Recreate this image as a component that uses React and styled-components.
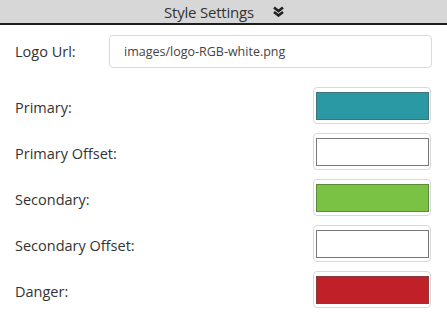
import React from "react";
import styled, { createGlobalStyle } from "styled-components";

const Global = createGlobalStyle`
  html, body { margin: 0; padding: 0; background: #fff; }
  body { font-family: "Open Sans", "Noto Sans", sans-serif; color: #333; }
`;

const Panel = styled.div`
  width: 447px;
  height: 315px;
  background: #fff;
  overflow: hidden;
`;

const Header = styled.div`
  height: 23px;
  background: #d7d7d7;
  border-bottom: 2px solid #1e1e1e;
  display: flex;
  align-items: center;
  justify-content: center;
  gap: 18px;
  padding-left: 2px;
  box-sizing: content-box;
`;

const Title = styled.span`
  font-size: 15px;
  color: #333;
  letter-spacing: -0.2px;
`;

const Body = styled.div`
  padding: 10px 15px 0 15px;
  display: flex;
  flex-direction: column;
`;

const Row = styled.div`
  display: flex;
  align-items: center;
  justify-content: space-between;
  height: ${(p) => p.$h}px;
  margin-bottom: ${(p) => p.$mb}px;
`;

const Label = styled.span`
  font-size: 14.5px;
  color: #333;
  padding-top: ${(p) => p.$pt || 0}px;
`;

const TextInput = styled.div`
  width: 323px;
  height: 33px;
  box-sizing: border-box;
  border: 1px solid #d9d9d9;
  border-radius: 4px;
  display: flex;
  align-items: center;
  padding-left: 14px;
  font-size: 12.5px;
  color: #444;
`;

const ColorBox = styled.div`
  width: 118px;
  height: 37px;
  box-sizing: border-box;
  border: 1px solid #d9d9d9;
  border-radius: 4px;
  padding: 4px 1px 3px 2px;
  margin-right: 1px;
  display: flex;
`;

const Swatch = styled.div`
  flex: 1;
  background: ${(p) => p.$color};
  border: 1px solid ${(p) => p.$border};
`;

const Chevron = () => (
  <svg width="13" height="11" viewBox="0 0 13 11">
    <path d="M2 1.5 L6.5 5 L11 1.5" fill="none" stroke="#222" strokeWidth="2.6" />
    <path d="M2 6 L6.5 9.5 L11 6" fill="none" stroke="#222" strokeWidth="2.6" />
  </svg>
);

const colors = [
  { label: "Primary:", color: "#2a99a3", border: "#41737a" },
  { label: "Primary Offset:", color: "#ffffff", border: "#777777" },
  { label: "Secondary:", color: "#7ac244", border: "#5a8a3a" },
  { label: "Secondary Offset:", color: "#ffffff", border: "#777777" },
  { label: "Danger:", color: "#c02027", border: "#8a3a3a" },
];

export default function App() {
  return (
    <>
      <Global />
      <Panel>
        <Header>
          <Title>Style Settings</Title>
          <Chevron />
        </Header>
        <Body>
          <Row $h={33} $mb={19}>
            <Label>Logo Url:</Label>
            <TextInput>images/logo-RGB-white.png</TextInput>
          </Row>
          {colors.map((c) => (
            <Row key={c.label} $h={37} $mb={9}>
              <Label $pt={4}>{c.label}</Label>
              <ColorBox>
                <Swatch $color={c.color} $border={c.border} />
              </ColorBox>
            </Row>
          ))}
        </Body>
      </Panel>
    </>
  );
}
